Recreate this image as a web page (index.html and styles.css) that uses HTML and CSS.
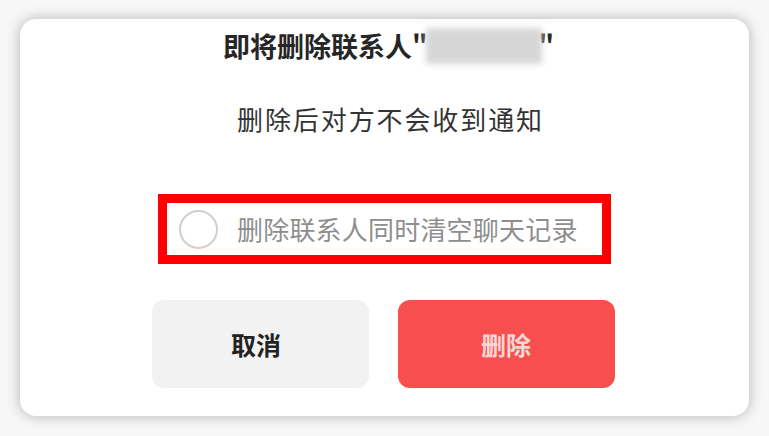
FILE: index.html
```html
<!DOCTYPE html>
<html lang="zh-CN">
<head>
	<meta charset="UTF-8">
	<title>删除联系人</title>
	<link rel="stylesheet" href="styles.css">
</head>
<body>
	<div class="dialog">
		<h1 class="title">即将删除联系人"<span class="name"></span>"</h1>
		<p class="tip">删除后对方不会收到通知</p>
		<div class="mark">
			<label class="option">
				<span class="radio"></span>
				<span class="option-text">删除联系人同时清空聊天记录</span>
			</label>
		</div>
		<div class="btns">
			<div class="btn cancel">取消</div>
			<div class="btn del">删除</div>
		</div>
	</div>
</body>
</html>
```
FILE: styles.css
```css
*{
	margin: 0;
	padding: 0;
	box-sizing: border-box;
}
body{
	width: 769px;
	height: 436px;
	background: #f7f7f7;
	padding: 19px 20px 0 20px;
	font-family: "Noto Sans CJK SC", "Noto Sans", sans-serif;
	overflow: hidden;
}
.dialog{
	width: 729px;
	height: 397px;
	background: #fff;
	border-radius: 16px;
	box-shadow: 0 0 14px rgba(0,0,0,0.28);
	padding-top: 9px;
	display: flex;
	flex-direction: column;
	align-items: center;
}
.title{
	font-size: 27px;
	line-height: 36px;
	font-weight: 700;
	color: #262626;
	display: flex;
	align-items: center;
	margin-left: 8px;
}
.name{
	display: inline-block;
	width: 116px;
	height: 36px;
	margin: 0 -3px 0 -2px;
	background: #d6d6d6;
	filter: blur(3px);
}
.tip{
	margin-top: 37px;
	margin-left: 12px;
	font-size: 26px;
	line-height: 36px;
	color: #333;
	letter-spacing: 1.9px;
}
.mark{
	margin-top: 57px;
	width: 453px;
	height: 70px;
	border: 9px solid #ff0000;
	padding: 0 0 0 12px;
	display: flex;
	align-items: center;
}
.option{
	display: flex;
	align-items: center;
}
.radio{
	width: 39px;
	height: 39px;
	border: 2px solid #cfcfcf;
	border-radius: 50%;
	margin-right: 19px;
}
.option-text{
	font-size: 26px;
	line-height: 36px;
	color: #8e8e8e;
	letter-spacing: 0.2px;
}
.btns{
	margin-top: 36px;
	margin-right: 3px;
	display: flex;
	gap: 29px;
}
.btn{
	width: 217px;
	height: 88px;
	border-radius: 12px;
	display: flex;
	align-items: center;
	justify-content: center;
	font-size: 25px;
	font-weight: 700;
}
.cancel{
	background: #f2f2f2;
	color: #222;
	padding-right: 8px;
}
.del{
	background: #f74f4f;
	color: #fbd6d6;
}
```
